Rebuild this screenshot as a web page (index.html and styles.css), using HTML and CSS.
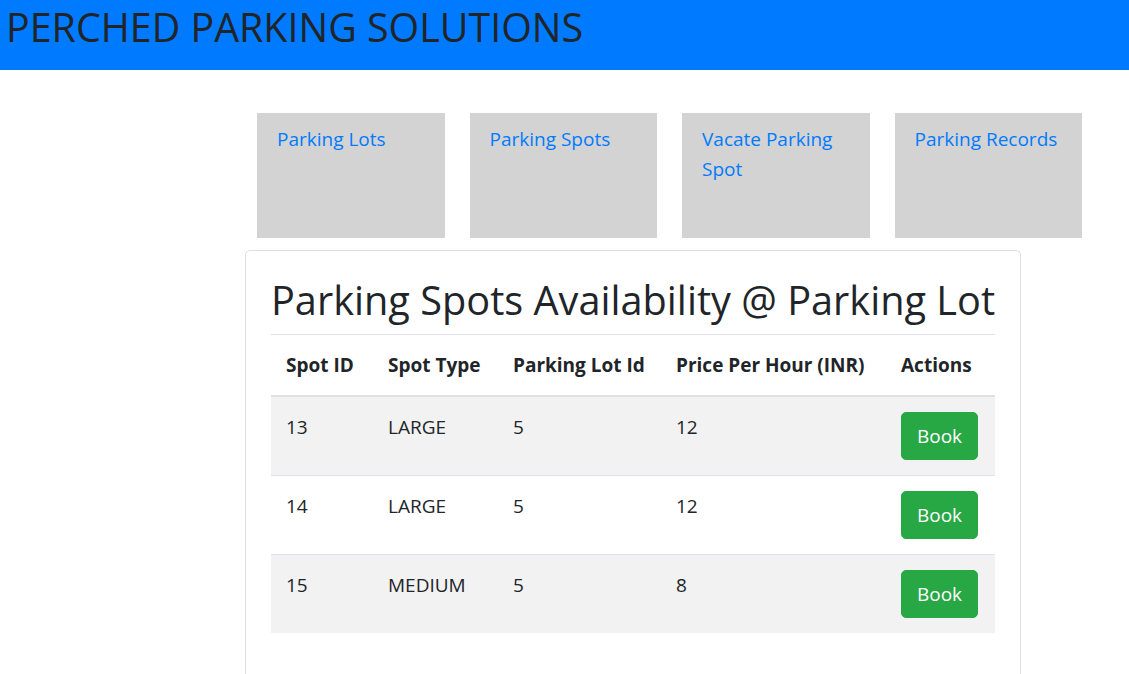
FILE: index.html
```html
<!DOCTYPE html>
<html lang="en">
<head>
<meta charset="utf-8">
<title>Perched Parking Solutions</title>
<link rel="stylesheet" href="styles.css">
</head>
<body>
<header class="topbar">
  <h2 class="brand">PERCHED PARKING SOLUTIONS</h2>
</header>
<main class="main">
  <nav class="tiles">
    <div class="tile"><a href="#" class="tile-link">Parking Lots</a></div>
    <div class="tile"><a href="#" class="tile-link">Parking Spots</a></div>
    <div class="tile"><a href="#" class="tile-link">Vacate Parking Spot</a></div>
    <div class="tile"><a href="#" class="tile-link">Parking Records</a></div>
  </nav>
  <section class="card">
    <h2 class="card-title">Parking Spots Availability @ Parking Lot</h2>
    <table class="table">
      <colgroup>
        <col class="c1"><col class="c2"><col class="c3"><col class="c4"><col class="c5">
      </colgroup>
      <thead>
        <tr><th>Spot ID</th><th>Spot Type</th><th>Parking Lot Id</th><th>Price Per Hour (INR)</th><th>Actions</th></tr>
      </thead>
      <tbody>
        <tr class="odd"><td>13</td><td>LARGE</td><td>5</td><td>12</td><td><button class="btn">Book</button></td></tr>
        <tr><td>14</td><td>LARGE</td><td>5</td><td>12</td><td><button class="btn">Book</button></td></tr>
        <tr class="odd"><td>15</td><td>MEDIUM</td><td>5</td><td>8</td><td><button class="btn">Book</button></td></tr>
      </tbody>
    </table>
  </section>
</main>
</body>
</html>
```
FILE: styles.css
```css
* { box-sizing: border-box; }
html, body { margin: 0; padding: 0; }
body {
  font-family: "Open Sans", "Noto Sans", sans-serif;
  font-size: 20px;
  line-height: 1.5;
  color: #212529;
  background: #fff;
  overflow: hidden;
}
.topbar {
  background: #007bff;
  height: 70px;
  padding: 3px 6px 0;
}
.brand {
  margin: 0;
  font-size: 39.4px;
  font-weight: 500;
  line-height: 48px;
  color: #212529;
}
.main {
  padding-top: 43px;
}
.tiles {
  display: flex;
  gap: 25px;
  margin-left: 257px;
}
.tile {
  width: 187.5px;
  height: 125px;
  background: #d3d3d3;
  padding: 11px 20px;
}
.tile-link {
  color: #007bff;
  text-decoration: none;
  font-size: 19px;
  line-height: 30px;
}
.card {
  margin: 12px 0 0 245px;
  width: 776px;
  min-height: 460px;
  border: 1px solid #dfdfdf;
  border-radius: 5px;
  padding: 25px;
}
.card-title {
  margin: 0 0 10px;
  font-size: 39.7px;
  font-weight: 500;
  line-height: 48px;
  white-space: nowrap;
}
.table {
  width: 724px;
  border-collapse: collapse;
  table-layout: fixed;
}
.c1 { width: 102px; }
.c2 { width: 125px; }
.c3 { width: 163px; }
.c4 { width: 225px; }
.c5 { width: 109px; }
.table th, .table td {
  padding: 15px;
  text-align: left;
  vertical-align: top;
  border-top: 1px solid #dee2e6;
  white-space: nowrap;
  font-size: 19px;
  line-height: 30px;
}
.table th {
  font-weight: 700;
  border-bottom: 2px solid #dee2e6;
}
.table tr.odd { background: #f2f2f2; }
.btn {
  display: block;
  font-family: inherit;
  font-size: 19px;
  line-height: 30px;
  height: 48px;
  padding: 8px 0;
  color: #fff;
  background: #28a745;
  border: 1px solid #28a745;
  border-radius: 5px;
  width: 77px;
  text-align: center;
  cursor: pointer;
}
```
